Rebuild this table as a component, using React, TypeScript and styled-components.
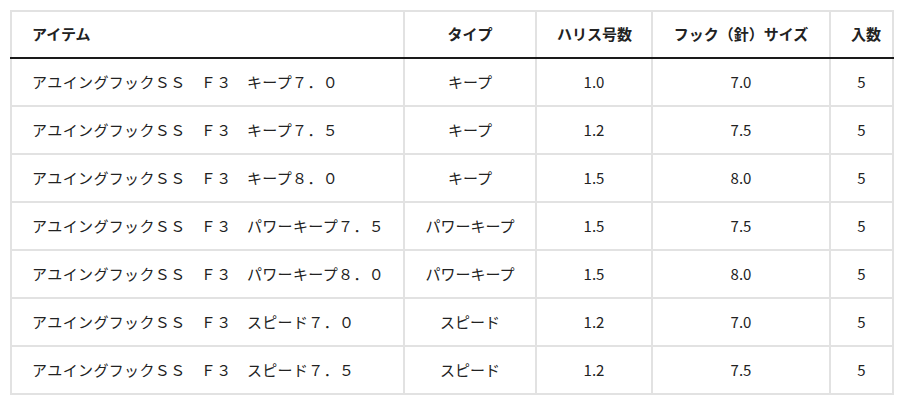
import styled, { createGlobalStyle } from 'styled-components'

const GlobalStyle = createGlobalStyle`
  body {
    margin: 0;
    background: #fff;
    font-family: "Noto Sans CJK JP", "Noto Sans", sans-serif;
    color: #222;
  }
  *, *::before, *::after {
    box-sizing: border-box;
  }
`

const Wrap = styled.div`
  padding: 10px 8px 10px 10px;
`

const Table = styled.table`
  width: 882px;
  border-collapse: collapse;
  table-layout: fixed;
  border: 2px solid #e2e2e2;
  font-size: 15px;
`

const Th = styled.th<{ $align?: string; $w: number }>`
  width: ${(p) => p.$w}px;
  height: 47px;
  padding: 0 20px 3px;
  text-align: ${(p) => p.$align || 'center'};
  font-weight: 700;
  border-left: 2px solid #e2e2e2;
  border-bottom: 2px solid #1a1a1a;
  white-space: nowrap;
`

const Td = styled.td<{ $align?: string; $wide?: boolean }>`
  height: 48px;
  padding: 0 20px 1px;
  text-align: ${(p) => p.$align || 'center'};
  letter-spacing: ${(p) => (p.$wide ? '0.35px' : '0')};
  border: 2px solid #e2e2e2;
  white-space: nowrap;
`

const columns = [
  { label: 'アイテム', w: 393, align: 'left' },
  { label: 'タイプ', w: 132 },
  { label: 'ハリス号数', w: 116 },
  { label: 'フック（針）サイズ', w: 178 },
  { label: '入数', w: 63 },
]

const rows = [
  ['アユイングフックＳＳ　Ｆ３　キープ７．０', 'キープ', '1.0', '7.0', '5'],
  ['アユイングフックＳＳ　Ｆ３　キープ７．５', 'キープ', '1.2', '7.5', '5'],
  ['アユイングフックＳＳ　Ｆ３　キープ８．０', 'キープ', '1.5', '8.0', '5'],
  ['アユイングフックＳＳ　Ｆ３　パワーキープ７．５', 'パワーキープ', '1.5', '7.5', '5'],
  ['アユイングフックＳＳ　Ｆ３　パワーキープ８．０', 'パワーキープ', '1.5', '8.0', '5'],
  ['アユイングフックＳＳ　Ｆ３　スピード７．０', 'スピード', '1.2', '7.0', '5'],
  ['アユイングフックＳＳ　Ｆ３　スピード７．５', 'スピード', '1.2', '7.5', '5'],
]

const App: React.FC = () => {
  return (
    <Wrap>
      <GlobalStyle />
      <Table>
        <thead>
          <tr>
            {columns.map((c) => (
              <Th key={c.label} $w={c.w} $align={c.align}>{c.label}</Th>
            ))}
          </tr>
        </thead>
        <tbody>
          {rows.map((r, idx) => (
            <tr key={idx}>
              {r.map((cell, i) => (
                <Td key={i} $align={i === 0 ? 'left' : 'center'} $wide={i === 0}>{cell}</Td>
              ))}
            </tr>
          ))}
        </tbody>
      </Table>
    </Wrap>
  )
}
export default App
